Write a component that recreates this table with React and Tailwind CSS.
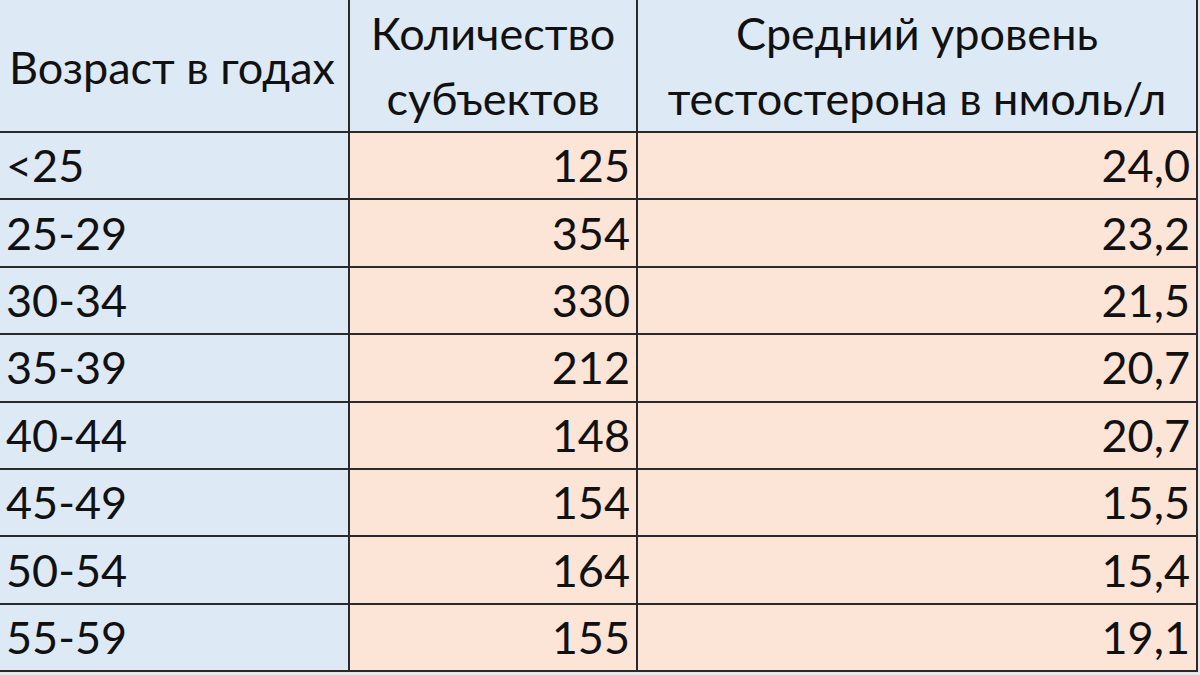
export default function App() {
  const rows = [
    ["<25", "125", "24,0"],
    ["25-29", "354", "23,2"],
    ["30-34", "330", "21,5"],
    ["35-39", "212", "20,7"],
    ["40-44", "148", "20,7"],
    ["45-49", "154", "15,5"],
    ["50-54", "164", "15,4"],
    ["55-59", "155", "19,1"],
  ];
  return (
    <div className="w-[1200px] h-[675px] overflow-hidden bg-[#e8e8e8] text-[#111]" style={{ fontFamily: "Lato, 'Noto Sans', sans-serif" }}>
      <div className="grid grid-cols-[350px_288px_560px] grid-rows-[133px_repeat(8,67.4px)] text-[45px] leading-none">
        <div className="bg-[#dde9f5] border-r-2 border-b-2 border-[#2a2a2a] flex items-center pl-[9px] pt-[4px]">Возраст в годах</div>
        <div className="bg-[#dde9f5] border-r-2 border-b-2 border-[#2a2a2a] flex flex-col items-center justify-center gap-[20px]">
          <span>Количество</span>
          <span>субъектов</span>
        </div>
        <div className="bg-[#dde9f5] border-r-2 border-b-2 border-[#2a2a2a] flex flex-col items-center justify-center gap-[20px]">
          <span>Средний уровень</span>
          <span>тестостерона в нмоль/л</span>
        </div>
        {rows.map((r, i) => (
          <div key={i} className="contents">
            <div className="bg-[#dde9f5] border-r-2 border-b-2 border-[#2a2a2a] flex items-center pl-[6px]">{r[0]}</div>
            <div className="bg-[#fce4d6] border-r-2 border-b-2 border-[#2a2a2a] flex items-center justify-end pr-[6px]">{r[1]}</div>
            <div className="bg-[#fce4d6] border-r-2 border-b-2 border-[#2a2a2a] flex items-center justify-end pr-[6px]">{r[2]}</div>
          </div>
        ))}
      </div>
    </div>
  );
}
